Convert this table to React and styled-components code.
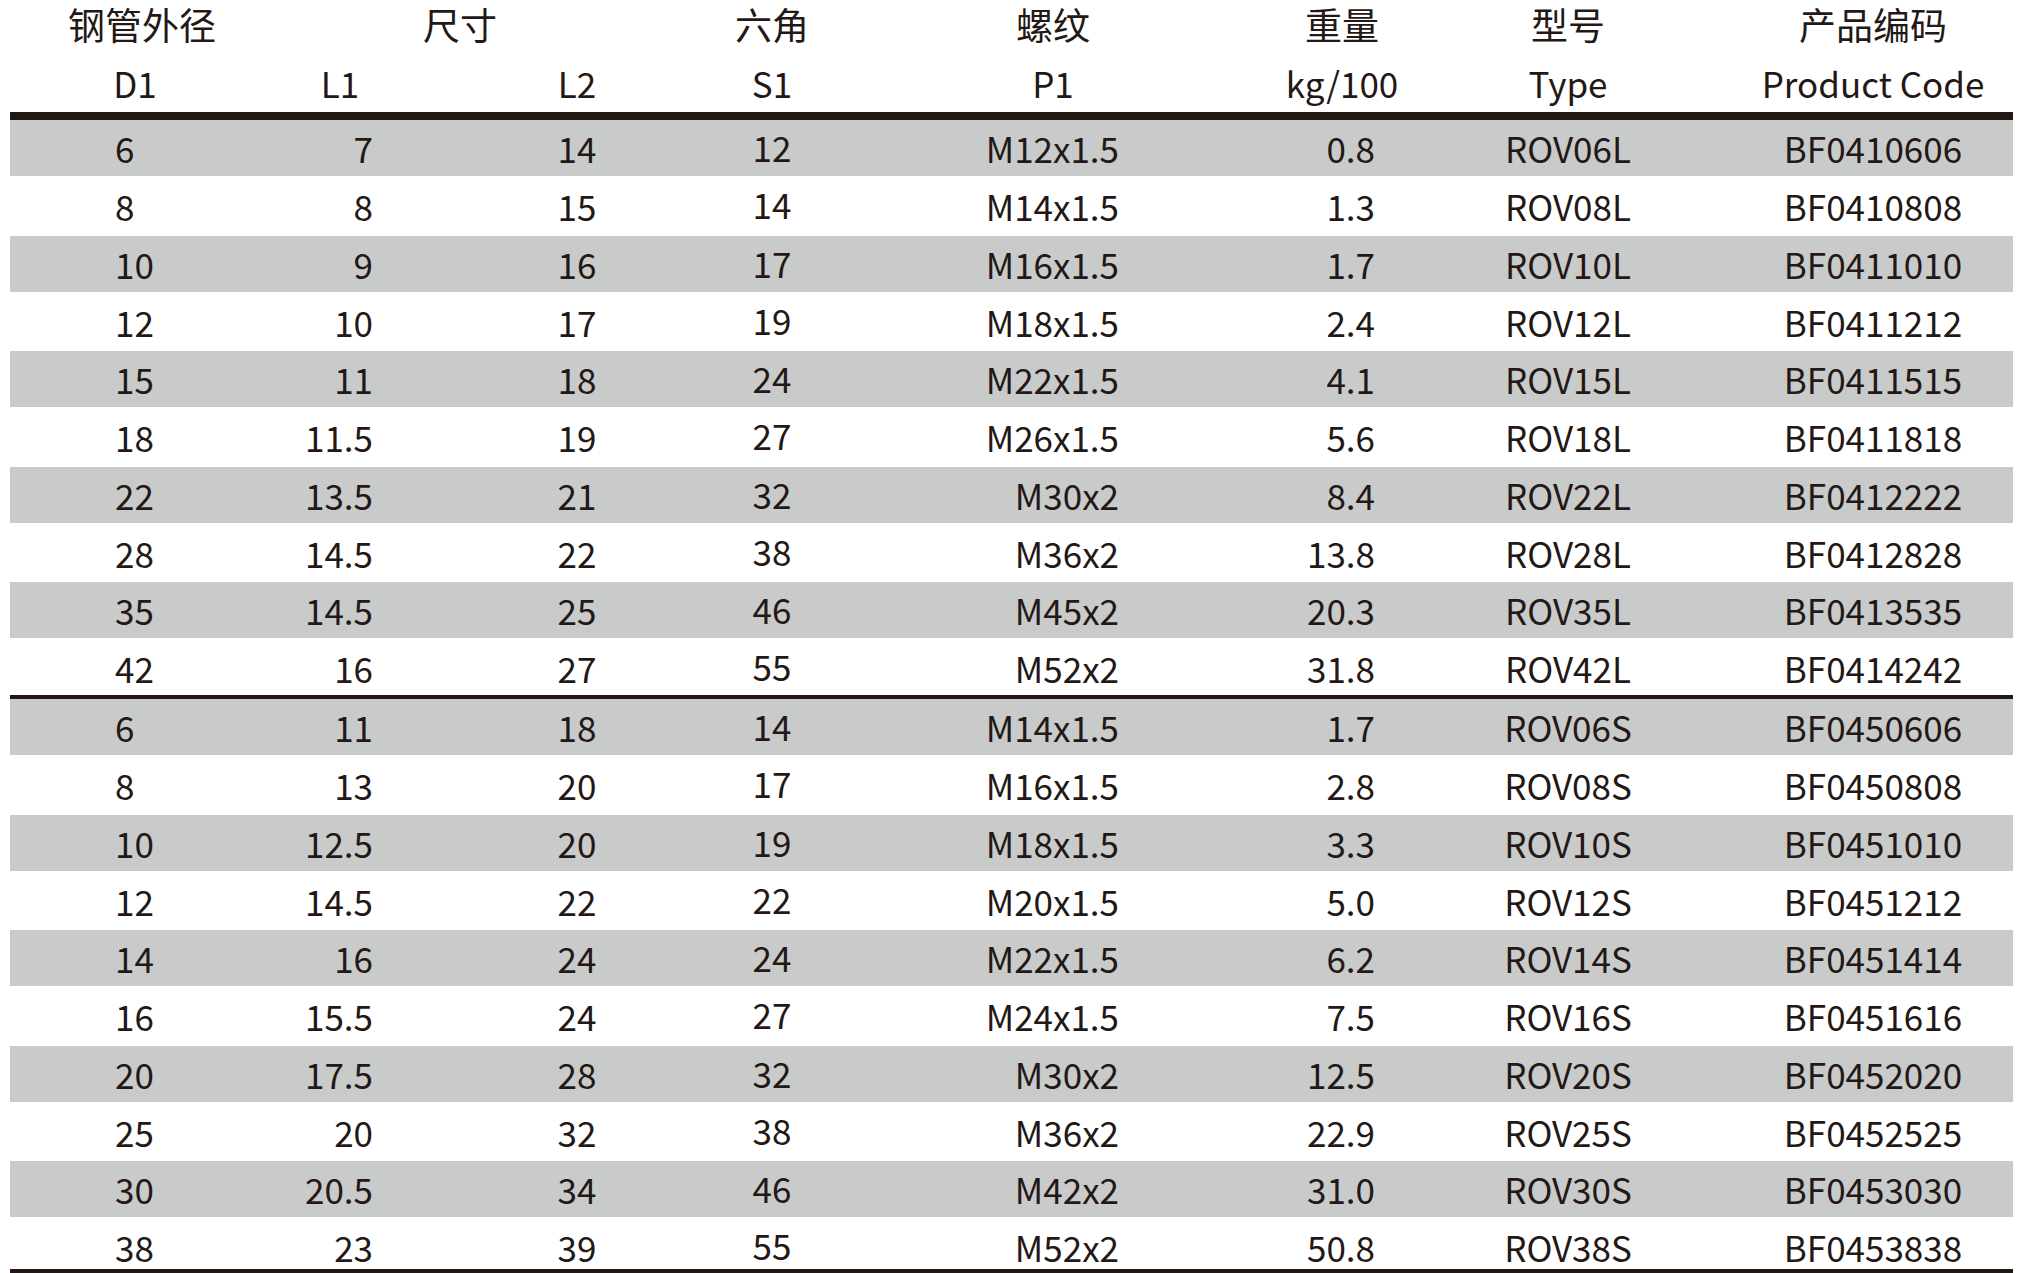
import styled, { createGlobalStyle } from "styled-components";

const GlobalStyle = createGlobalStyle`
  html, body {
    margin: 0;
    padding: 0;
    background: #ffffff;
    overflow: hidden;
  }
  body {
    font-family: "Noto Sans CJK SC", "Noto Sans", sans-serif;
    color: #231815;
  }
`;

const GRID = "250px 190px 250px 200px 300px 260px 230px 323px";
const INK = "#231815";
const SHADE = "#c9caca";

// per column: header padding [left, right], value alignment and padding
const COLS = [
  { head: [0, 0], align: "left", pad: [105, 0] },
  { head: [0, 30], align: "right", pad: [0, 77] },
  { head: [4, 0], align: "center", pad: [4, 0] },
  { head: [0, 56], align: "center", pad: [0, 56], lift: 1.5 },
  { head: [6, 0], align: "right", pad: [0, 81] },
  { head: [24, 0], align: "right", pad: [0, 85] },
  { head: [0, 14], align: "center", pad: [0, 14] },
  { head: [43, 0], align: "center", pad: [43, 0] },
];

const TITLES = [
  { text: "钢管外径", span: 1, pad: [14, 0] },
  { text: "尺寸", span: 2, pad: [0, 40] },
  { text: "六角", span: 1, pad: [0, 56] },
  { text: "螺纹", span: 1, pad: [6, 0] },
  { text: "重量", span: 1, pad: [24, 0] },
  { text: "型号", span: 1, pad: [0, 14] },
  { text: "产品编码", span: 1, pad: [43, 0] },
];

const LABELS = ["D1", "L1", "L2", "S1", "P1", "kg/100", "Type", "Product Code"];

const GROUPS = [
  [
    ["6", "7", "14", "12", "M12x1.5", "0.8", "ROV06L", "BF0410606"],
    ["8", "8", "15", "14", "M14x1.5", "1.3", "ROV08L", "BF0410808"],
    ["10", "9", "16", "17", "M16x1.5", "1.7", "ROV10L", "BF0411010"],
    ["12", "10", "17", "19", "M18x1.5", "2.4", "ROV12L", "BF0411212"],
    ["15", "11", "18", "24", "M22x1.5", "4.1", "ROV15L", "BF0411515"],
    ["18", "11.5", "19", "27", "M26x1.5", "5.6", "ROV18L", "BF0411818"],
    ["22", "13.5", "21", "32", "M30x2", "8.4", "ROV22L", "BF0412222"],
    ["28", "14.5", "22", "38", "M36x2", "13.8", "ROV28L", "BF0412828"],
    ["35", "14.5", "25", "46", "M45x2", "20.3", "ROV35L", "BF0413535"],
    ["42", "16", "27", "55", "M52x2", "31.8", "ROV42L", "BF0414242"],
  ],
  [
    ["6", "11", "18", "14", "M14x1.5", "1.7", "ROV06S", "BF0450606"],
    ["8", "13", "20", "17", "M16x1.5", "2.8", "ROV08S", "BF0450808"],
    ["10", "12.5", "20", "19", "M18x1.5", "3.3", "ROV10S", "BF0451010"],
    ["12", "14.5", "22", "22", "M20x1.5", "5.0", "ROV12S", "BF0451212"],
    ["14", "16", "24", "24", "M22x1.5", "6.2", "ROV14S", "BF0451414"],
    ["16", "15.5", "24", "27", "M24x1.5", "7.5", "ROV16S", "BF0451616"],
    ["20", "17.5", "28", "32", "M30x2", "12.5", "ROV20S", "BF0452020"],
    ["25", "20", "32", "38", "M36x2", "22.9", "ROV25S", "BF0452525"],
    ["30", "20.5", "34", "46", "M42x2", "31.0", "ROV30S", "BF0453030"],
    ["38", "23", "39", "55", "M52x2", "50.8", "ROV38S", "BF0453838"],
  ],
];

const Sheet = styled.div`
  width: 2003px;
  padding-left: 10px;
  font-size: 35px;
  color: ${INK};
`;

const HeadRow = styled.div`
  display: grid;
  grid-template-columns: ${GRID};
  height: ${p => p.$h}px;
  line-height: ${p => p.$lh || p.$h}px;
  font-size: ${p => p.$size || 35}px;
`;

const HeadCell = styled.div`
  grid-column: span ${p => p.$span || 1};
  text-align: center;
  white-space: nowrap;
  padding-left: ${p => p.$pad[0]}px;
  padding-right: ${p => p.$pad[1]}px;
`;

const Rule = styled.div`
  height: ${p => p.$w}px;
  background: ${INK};
`;

const Row = styled.div`
  display: grid;
  grid-template-columns: ${GRID};
  height: ${p => p.$h}px;
  overflow: visible;
  background: ${p => (p.$shaded ? SHADE : "transparent")};
`;

const Cell = styled.div`
  text-align: ${p => p.$col.align};
  white-space: nowrap;
  padding-left: ${p => p.$col.pad[0]}px;
  padding-right: ${p => p.$col.pad[1]}px;
  line-height: ${p => p.$lh - 2 * (p.$col.lift || 0)}px;
`;

// gray rows are a little shorter than white ones; the last row of each
// block is trimmed by the rule under it
function rowSize(gi, ri) {
  const shaded = ri % 2 === 0;
  const lh = shaded ? 56 : 59.5;
  let h = lh;
  if (ri === GROUPS[gi].length - 1) h = gi === GROUPS.length - 1 ? 52 : 57;
  return { h, lh, shaded };
}

export default function App() {
  return (
    <>
      <GlobalStyle />
      <Sheet>
        <HeadRow $h={53} $lh={48} $size={37}>
          {TITLES.map(t => (
            <HeadCell key={t.text} $span={t.span} $pad={t.pad}>
              {t.text}
            </HeadCell>
          ))}
        </HeadRow>
        <HeadRow $h={59}>
          {LABELS.map((l, i) => (
            <HeadCell key={l} $pad={COLS[i].head}>
              {l}
            </HeadCell>
          ))}
        </HeadRow>
        <Rule $w={8} />
        {GROUPS.map((rows, gi) => (
          <div key={gi}>
            {gi > 0 && <Rule $w={4} />}
            {rows.map((r, ri) => {
              const { h, lh, shaded } = rowSize(gi, ri);
              return (
                <Row key={ri} $h={h} $shaded={shaded}>
                  {r.map((v, ci) => (
                    <Cell key={ci} $col={COLS[ci]} $lh={lh}>
                      {v}
                    </Cell>
                  ))}
                </Row>
              );
            })}
          </div>
        ))}
        <Rule $w={4} />
      </Sheet>
    </>
  );
}
